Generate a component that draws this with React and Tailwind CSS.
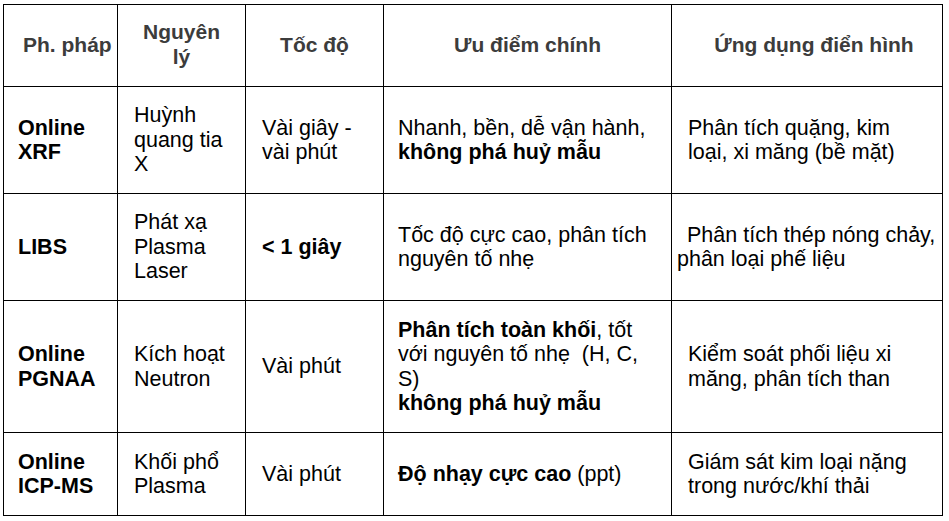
const rows = [
  {
    method: ["Online", "XRF"],
    principle: ["Huỳnh", "quang tia", "X"],
    speed: <>Vài giây -<br />vài phút</>,
    pros: (
      <>
        Nhanh, bền, dễ vận hành,
        <br />
        <b>không phá huỷ mẫu</b>
      </>
    ),
    uses: <>Phân tích quặng, kim<br />loại, xi măng (bề mặt)</>,
    usesPad: "pl-[16px]",
    h: "h-[107px]",
  },
  {
    method: ["LIBS"],
    principle: ["Phát xạ", "Plasma", "Laser"],
    speed: <b>&lt; 1 giây</b>,
    pros: <>Tốc độ cực cao, phân tích<br />nguyên tố nhẹ</>,
    uses: (
      <>
        <span className="pl-[10px]">Phân tích thép nóng chảy,</span>
        <br />
        phân loại phế liệu
      </>
    ),
    usesPad: "pl-[5px]",
    h: "h-[107px]",
  },
  {
    method: ["Online", "PGNAA"],
    principle: ["Kích hoạt", "Neutron"],
    speed: "Vài phút",
    pros: (
      <>
        <b>Phân tích toàn khối</b>, tốt
        <br />
        với nguyên tố nhẹ&nbsp; (H, C,
        <br />
        S)
        <br />
        <b>không phá huỷ mẫu</b>
      </>
    ),
    uses: <>Kiểm soát phối liệu xi<br />măng, phân tích than</>,
    usesPad: "pl-[16px]",
    h: "h-[132px]",
  },
  {
    method: ["Online", "ICP-MS"],
    principle: ["Khối phổ", "Plasma"],
    speed: "Vài phút",
    pros: (
      <>
        <b>Độ nhạy cực cao</b> (ppt)
      </>
    ),
    uses: <>Giám sát kim loại nặng<br />trong nước/khí thải</>,
    usesPad: "pl-[16px]",
    h: "h-[83px]",
  },
];

const lines = (arr) =>
  arr.map((t, i) => (
    <span key={i}>
      {i > 0 && <br />}
      {t}
    </span>
  ));

export default function App() {
  return (
    <div className="w-[949px] h-[521px] bg-white pt-[4px] pl-[3px] font-['Liberation_Sans',Arial,sans-serif] text-[21.5px] leading-[24.5px] text-black">
      <table className="w-[940px] table-fixed border-collapse">
        <colgroup>
          <col className="w-[114px]" />
          <col className="w-[128px]" />
          <col className="w-[138px]" />
          <col className="w-[288px]" />
          <col className="w-[271px]" />
        </colgroup>

        <thead>
          <tr className="h-[82px] text-[#3c3c3c] text-[21px]">
            <th className="border border-black pl-[19px] pr-0 text-left align-middle font-bold">
              Ph. pháp
            </th>
            <th className="border border-black text-center align-middle font-bold pb-[2px]">
              Nguyên
              <br />
              lý
            </th>
            <th className="border border-black text-center align-middle font-bold">
              Tốc độ
            </th>
            <th className="border border-black text-center align-middle font-bold">
              Ưu điểm chính
            </th>
            <th className="border border-black pl-[14px] text-center align-middle font-bold">
              Ứng dụng điển hình
            </th>
          </tr>
        </thead>

        <tbody>
          {rows.map((r, idx) => (
            <tr key={idx} className={r.h}>
              <td className="border border-black pl-[14px] align-middle font-bold">
                {lines(r.method)}
              </td>
              <td className="border border-black pl-[16px] align-middle">
                {lines(r.principle)}
              </td>
              <td className="border border-black pl-[16px] align-middle">
                {r.speed}
              </td>
              <td className="border border-black pl-[14px] align-middle">
                {r.pros}
              </td>
              <td className={`border border-black ${r.usesPad} align-middle`}>
                {r.uses}
              </td>
            </tr>
          ))}
        </tbody>
      </table>
    </div>
  );
}
